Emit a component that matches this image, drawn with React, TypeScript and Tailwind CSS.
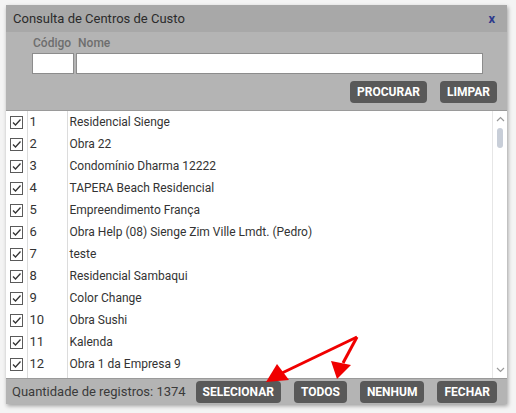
import { useState } from "react";

const rows = [
    { id: 1, name: "Residencial Sienge" },
    { id: 2, name: "Obra 22" },
    { id: 3, name: "Condomínio Dharma 12222" },
    { id: 4, name: "TAPERA Beach Residencial" },
    { id: 5, name: "Empreendimento França" },
    { id: 6, name: "Obra Help (08) Sienge Zim Ville Lmdt. (Pedro)" },
    { id: 7, name: "teste" },
    { id: 8, name: "Residencial Sambaqui" },
    { id: 9, name: "Color Change" },
    { id: 10, name: "Obra Sushi" },
    { id: 11, name: "Kalenda" },
    { id: 12, name: "Obra 1 da Empresa 9" },
];

function Check() {
    return (
        <span className="flex h-[13px] w-[13px] items-center justify-center border border-[#5a5a5a] bg-white">
            <svg width="11" height="11" viewBox="0 0 11 11">
                <path d="M2 5.5 L4.5 8 L9.5 2.5" fill="none" stroke="#333" strokeWidth="1.3" />
            </svg>
        </span>
    );
}

function Btn({ children }: { children: string }) {
    return (
        <button className="h-[22px] shrink-0 whitespace-nowrap rounded-[4px] bg-[#595959] px-[7px] text-[12px] font-bold text-white">
            {children}
        </button>
    );
}

function App() {
    const [codigo, setCodigo] = useState("");
    const [nome, setNome] = useState("");

    return (
        <div className="relative min-h-screen bg-[#f4f4f4] pl-[6px] pt-[5px] font-['Roboto',sans-serif]">
            <div className="flex h-[399px] w-[501px] flex-col bg-[#b4b4b4] shadow-[1px_2px_4px_rgba(0,0,0,0.35)]">
                <div className="flex h-[27px] shrink-0 items-center justify-between bg-[#a8a8a8] pl-[7px] pr-[12px]">
                    <span className="text-[13px] text-[#2b2b2b]">Consulta de Centros de Custo</span>
                    <span className="text-[13px] font-bold text-[#2d3a8c]">x</span>
                </div>

                <div className="flex shrink-0 flex-col pl-[26px] pr-[24px]">
                    <div className="mt-[4px] flex h-[14px] items-center gap-[7px] text-[12px] font-medium text-[#6e6e6e]">
                        <span className="ml-[1px]">Código</span>
                        <span>Nome</span>
                    </div>
                    <div className="mt-[3px] flex gap-[2px]">
                        <input value={codigo} onChange={(e) => setCodigo(e.target.value)} className="h-[21px] w-[42px] border border-[#8c8c8c] bg-white outline-none" />
                        <input value={nome} onChange={(e) => setNome(e.target.value)} className="h-[21px] flex-1 border border-[#8c8c8c] bg-white outline-none" />
                    </div>
                    <div className="mt-[7px] mr-[-14px] flex justify-end gap-[13px]">
                        <Btn>PROCURAR</Btn>
                        <Btn>LIMPAR</Btn>
                    </div>
                </div>

                <div className="mt-[7px] flex h-[269px] shrink-0 border-y border-[#9a9a9a] bg-white">
                    <div className="flex-1 overflow-hidden">
                        <table className="w-full border-collapse text-[12px] text-[#333]">
                            <tbody>
                                {rows.map((r) => (
                                    <tr key={r.id} className="h-[22px]">
                                        <td className="w-[21px] border-r border-[#dcdcdc] pl-[4px]">
                                            <Check />
                                        </td>
                                        <td className="w-[40px] border-r border-[#dcdcdc] pl-[2px] text-[13px]">{r.id}</td>
                                        <td className="pl-[2px]">{r.name}</td>
                                    </tr>
                                ))}
                                <tr className="h-[5px]">
                                    <td className="border-r border-[#dcdcdc]" />
                                    <td className="border-r border-[#dcdcdc]" />
                                    <td />
                                </tr>
                            </tbody>
                        </table>
                    </div>
                    <div className="flex w-[15px] flex-col items-center border-l border-[#e6e6e6] bg-white">
                        <svg className="mt-[5px]" width="9" height="6" viewBox="0 0 9 6">
                            <path d="M1 5 L4.5 1.5 L8 5" fill="none" stroke="#9a9a9a" strokeWidth="1.2" />
                        </svg>
                        <div className="mt-[6px] h-[20px] w-[6px] rounded-[3px] bg-[#c8ced8]" />
                        <div className="flex-1" />
                        <svg className="mb-[5px]" width="9" height="6" viewBox="0 0 9 6">
                            <path d="M1 1 L4.5 4.5 L8 1" fill="none" stroke="#9a9a9a" strokeWidth="1.2" />
                        </svg>
                    </div>
                </div>

                <div className="flex flex-1 items-center pl-[6px] pr-[10px]">
                    <span className="whitespace-nowrap text-[13px] text-[#3a3a3a]">Quantidade de registros: 1374</span>
                    <div className="ml-auto flex gap-[13px]">
                        <Btn>SELECIONAR</Btn>
                        <Btn>TODOS</Btn>
                        <Btn>NENHUM</Btn>
                        <Btn>FECHAR</Btn>
                    </div>
                </div>
            </div>

            <svg className="pointer-events-none absolute left-0 top-0" width="516" height="413" viewBox="0 0 516 413">
                <line x1="357" y1="337" x2="282" y2="373" stroke="#f00000" strokeWidth="3" />
                <polygon points="266,382 277,364 289,380" fill="#f00000" />
                <line x1="357" y1="337" x2="343" y2="363" stroke="#f00000" strokeWidth="3" />
                <polygon points="337,379 331,361 351,365" fill="#f00000" />
            </svg>
        </div>
    );
}

export default App
